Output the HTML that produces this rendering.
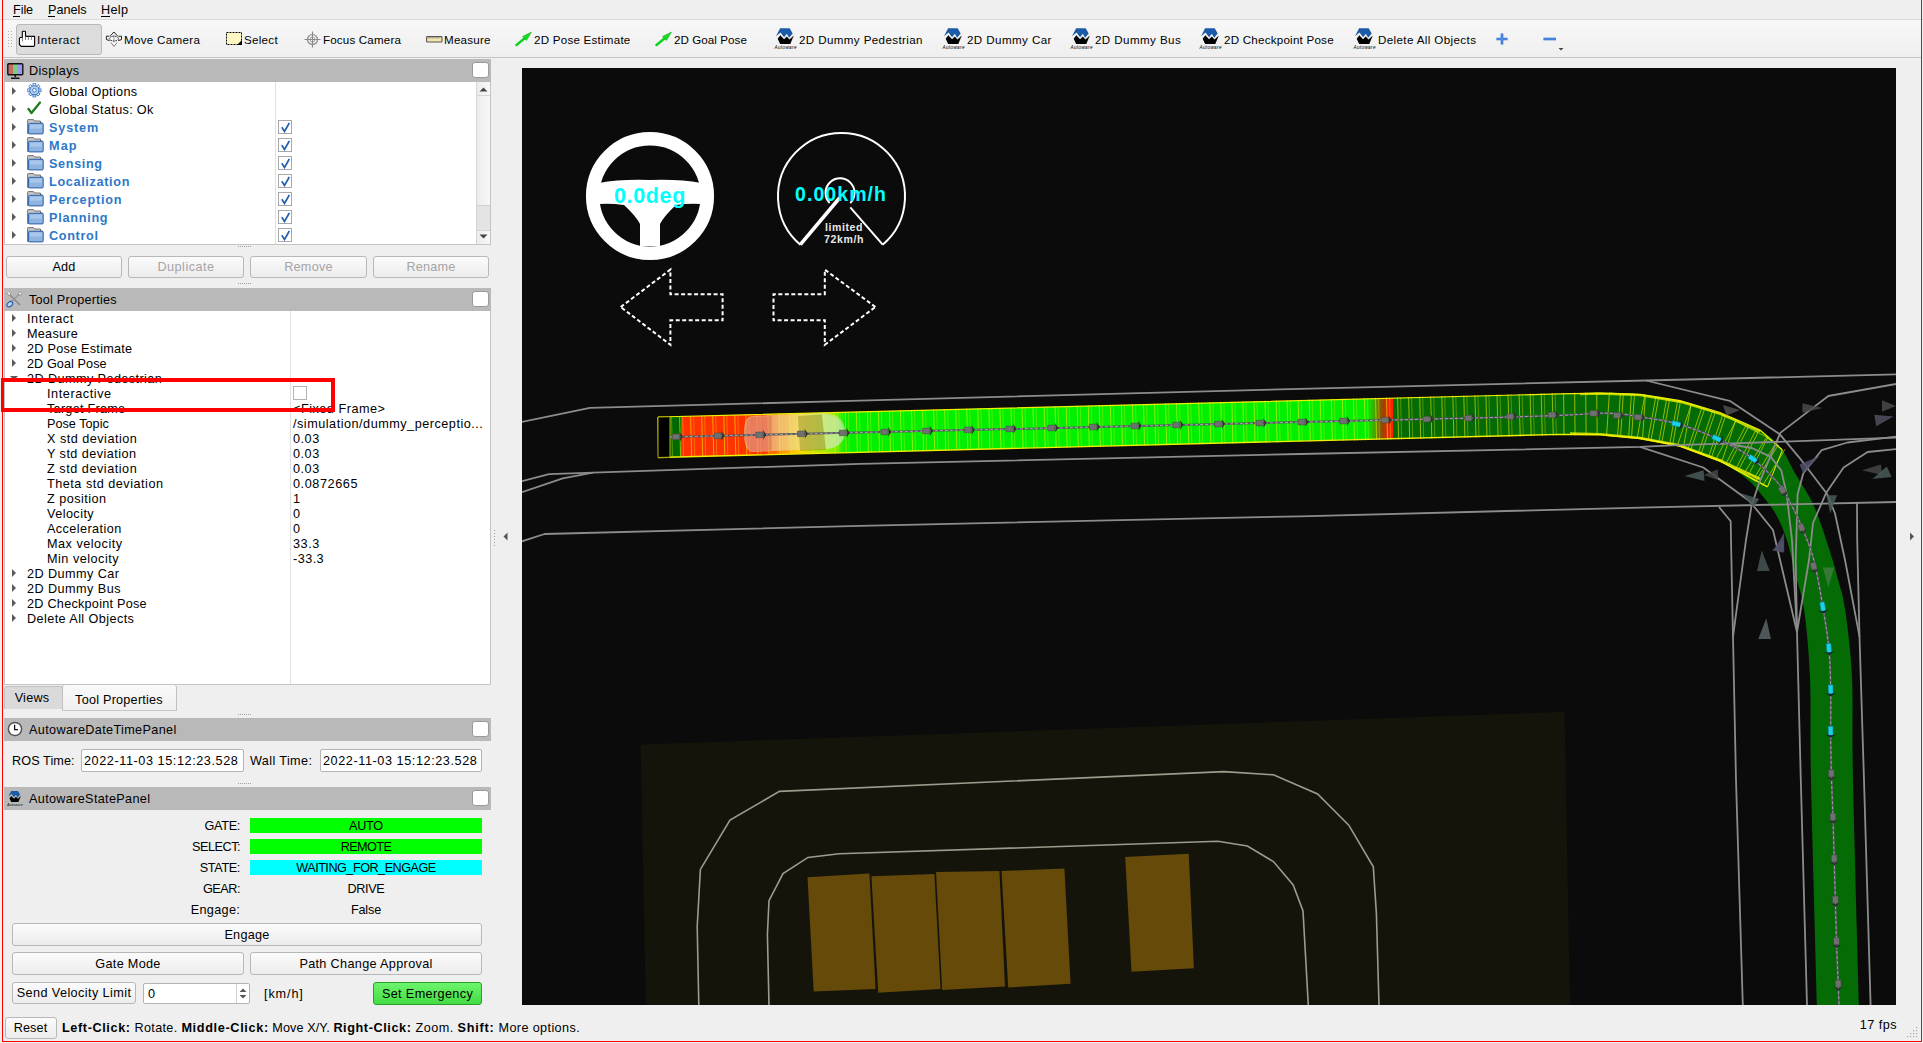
<!DOCTYPE html><html><head><meta charset="utf-8"><style>
*{box-sizing:border-box}
html,body{margin:0;padding:0}
body{width:1923px;height:1043px;overflow:hidden;position:relative;background:#efefef;font-family:"Liberation Sans",sans-serif;color:#000}
.t{position:absolute;white-space:pre;line-height:1;font-family:"Liberation Sans",sans-serif}
.a{position:absolute}
.btn{position:absolute;border:1px solid #b8b8b8;border-radius:3px;background:linear-gradient(#fbfbfb,#ececec)}
.hdr{position:absolute;left:4px;width:487px;height:23px;background:#b9b9b9}
.cls{position:absolute;left:472px;width:17px;height:16px;background:#fff;border:1px solid #9a9a9a;border-radius:3px}
.cb{position:absolute;width:14px;height:14px;border:1px solid #a8a8a8;background:#fff}
.arr{position:absolute;width:0;height:0;border-top:4px solid transparent;border-bottom:4px solid transparent;border-left:4px solid #5a5a5a}
.dots{position:absolute;height:1px;width:13px;background-image:linear-gradient(90deg,#a0a0a0 1px,transparent 1px);background-size:2px 1px}
</style></head><body>
<div class="a" style="left:0;top:19px;width:1923px;height:1px;background:#d9d9d9"></div>
<div class="t" style="left:13.00px;top:4.28px;font-size:12.66px;letter-spacing:-0.078px;">File</div>
<div class="t" style="left:48.00px;top:4.28px;font-size:12.66px;letter-spacing:-0.005px;">Panels</div>
<div class="t" style="left:101.00px;top:4.28px;font-size:12.66px;letter-spacing:0.340px;">Help</div>
<div class="a" style="left:13px;top:16px;width:7px;height:1px;background:#000"></div>
<div class="a" style="left:48px;top:16px;width:7px;height:1px;background:#000"></div>
<div class="a" style="left:101px;top:16px;width:9px;height:1px;background:#000"></div>
<div class="a" style="left:3px;top:20px;width:1918px;height:37px;background:linear-gradient(#f7f7f7,#efefef)"></div>
<div class="a" style="left:3px;top:57px;width:1918px;height:1px;background:#c4c4c4"></div>
<svg class="a" style="left:8px;top:30px" width="6" height="19"><rect x="0" y="1" width="1" height="1" fill="#b0b0b0"/><rect x="0" y="4" width="1" height="1" fill="#b0b0b0"/><rect x="0" y="7" width="1" height="1" fill="#b0b0b0"/><rect x="0" y="10" width="1" height="1" fill="#b0b0b0"/><rect x="0" y="13" width="1" height="1" fill="#b0b0b0"/><rect x="0" y="16" width="1" height="1" fill="#b0b0b0"/><rect x="3" y="1" width="1" height="1" fill="#b0b0b0"/><rect x="3" y="4" width="1" height="1" fill="#b0b0b0"/><rect x="3" y="7" width="1" height="1" fill="#b0b0b0"/><rect x="3" y="10" width="1" height="1" fill="#b0b0b0"/><rect x="3" y="13" width="1" height="1" fill="#b0b0b0"/><rect x="3" y="16" width="1" height="1" fill="#b0b0b0"/></svg>
<div class="a" style="left:16px;top:24px;width:86px;height:31px;background:#dcdcdc;border:1px solid #b9b9b9;border-radius:3px"></div>
<svg class="a" style="left:16px;top:28px" width="22" height="22" viewBox="0 0 22 22"><path d="M6.3 9.5 V3.8 Q6.3 3.2 7 3.2 H8.8 Q9.5 3.2 9.5 3.8 V8.4 H18.6 V17.6 L17.7 18.4 H5.3 L3.4 16.5 V10.4 L4.2 9.5 Z" fill="#fff" stroke="#000" stroke-width="1.1" stroke-linejoin="round"/><path d="M6.5 9.5 V13.5 M9.5 8.4 V12 M12.4 8.4 V12 M15.4 8.4 V12" stroke="#666" stroke-width="0.8"/></svg>
<div class="t" style="left:37.00px;top:34.18px;font-size:11.6px;letter-spacing:0.529px;">Interact</div>
<svg class="a" style="left:102px;top:28px" width="22" height="22" viewBox="102 28 22 22"><rect x="113.2" y="35" width="1.6" height="8.5" fill="#c4c4c4"/><g fill="none" stroke="#222" stroke-width="1" stroke-linejoin="round"><path d="M110.4 35.8 L113.9 32 L117.4 35.8"/><ellipse cx="113.9" cy="38.6" rx="4.6" ry="2.4" stroke-dasharray="1.6 0.9"/><path d="M109.4 36.2 H106.4 V39.6 L109.6 40.6 M118.4 36.2 H121.5 V39.6 L118.2 40.6"/></g><path d="M111 42.6 L113.9 46.4 L117 42.6" fill="#fff" stroke="#777" stroke-width="1"/></svg>
<div class="t" style="left:124.00px;top:34.18px;font-size:11.6px;letter-spacing:0.303px;">Move Camera</div>
<svg class="a" style="left:226px;top:32px" width="17" height="14" viewBox="0 0 17 14"><rect x="0.5" y="0.5" width="15" height="12" fill="#fff7c4" stroke="#000" stroke-width="1" stroke-dasharray="2 1"/><path d="M16 8 V13 H11 Z" fill="#000"/></svg>
<div class="t" style="left:244.00px;top:34.18px;font-size:11.6px;letter-spacing:0.284px;">Select</div>
<svg class="a" style="left:304px;top:31px" width="17" height="17" viewBox="0 0 17 17"><g fill="none" stroke="#8a8a8a" stroke-width="1.2"><circle cx="8.5" cy="8.5" r="5"/><path d="M8.5 0.5 V16.5 M0.5 8.5 H16.5"/><circle cx="8.5" cy="8.5" r="2.5" stroke-width="0.7"/></g></svg>
<div class="t" style="left:323.00px;top:34.18px;font-size:11.6px;letter-spacing:0.169px;">Focus Camera</div>
<svg class="a" style="left:426px;top:36px" width="17" height="7" viewBox="0 0 17 7"><rect x="0.6" y="0.6" width="15.4" height="5.4" rx="0.8" fill="#f2e5ae" stroke="#555" stroke-width="1.1"/><path d="M3 1 v2 M5 1 v1.5 M7 1 v2 M9 1 v1.5 M11 1 v2 M13 1 v1.5" stroke="#777" stroke-width="0.6"/></svg>
<div class="t" style="left:444.00px;top:34.18px;font-size:11.6px;letter-spacing:0.230px;">Measure</div>
<svg class="a" style="left:515px;top:31px" width="18" height="16" viewBox="0 0 18 16"><path d="M1.5 14 L10 7" stroke="#10d020" stroke-width="2.4" stroke-linecap="round"/><path d="M16.5 1 L7.5 5.5 L11.5 9.5 Z" fill="#10e020" stroke="#0a8a10" stroke-width="0.4"/></svg>
<div class="t" style="left:534.00px;top:34.18px;font-size:11.6px;letter-spacing:0.233px;">2D Pose Estimate</div>
<svg class="a" style="left:655px;top:31px" width="18" height="16" viewBox="0 0 18 16"><path d="M1.5 14 L10 7" stroke="#10d020" stroke-width="2.4" stroke-linecap="round"/><path d="M16.5 1 L7.5 5.5 L11.5 9.5 Z" fill="#10e020" stroke="#0a8a10" stroke-width="0.4"/></svg>
<div class="t" style="left:674.00px;top:34.18px;font-size:11.6px;letter-spacing:0.068px;">2D Goal Pose</div>
<svg class="a" style="left:773px;top:27px" width="25.0" height="24.0" viewBox="0 0 25 24"><path d="M3 9.3 L7.1 1.3 H16.7 L19.7 6.4 L16.2 10.8 L13.8 6.8 L11.1 10.2 L7.5 5.5 Z" fill="#1b5aa6"/><path d="M4.7 11.8 L7.3 8.3 L11.1 12.2 L13.8 9.6 L16.5 12.4 L20.8 8.5 L17.3 16.9 H7.1 Z" fill="#000"/><text x="1.5" y="22.3" font-size="4.6" font-style="italic" font-family="Liberation Sans" fill="#000" textLength="22">Autoware</text></svg>
<div class="t" style="left:799.00px;top:34.18px;font-size:11.6px;letter-spacing:0.384px;">2D Dummy Pedestrian</div>
<svg class="a" style="left:941px;top:27px" width="25.0" height="24.0" viewBox="0 0 25 24"><path d="M3 9.3 L7.1 1.3 H16.7 L19.7 6.4 L16.2 10.8 L13.8 6.8 L11.1 10.2 L7.5 5.5 Z" fill="#1b5aa6"/><path d="M4.7 11.8 L7.3 8.3 L11.1 12.2 L13.8 9.6 L16.5 12.4 L20.8 8.5 L17.3 16.9 H7.1 Z" fill="#000"/><text x="1.5" y="22.3" font-size="4.6" font-style="italic" font-family="Liberation Sans" fill="#000" textLength="22">Autoware</text></svg>
<div class="t" style="left:967.00px;top:34.18px;font-size:11.6px;letter-spacing:0.409px;">2D Dummy Car</div>
<svg class="a" style="left:1069px;top:27px" width="25.0" height="24.0" viewBox="0 0 25 24"><path d="M3 9.3 L7.1 1.3 H16.7 L19.7 6.4 L16.2 10.8 L13.8 6.8 L11.1 10.2 L7.5 5.5 Z" fill="#1b5aa6"/><path d="M4.7 11.8 L7.3 8.3 L11.1 12.2 L13.8 9.6 L16.5 12.4 L20.8 8.5 L17.3 16.9 H7.1 Z" fill="#000"/><text x="1.5" y="22.3" font-size="4.6" font-style="italic" font-family="Liberation Sans" fill="#000" textLength="22">Autoware</text></svg>
<div class="t" style="left:1095.00px;top:34.18px;font-size:11.6px;letter-spacing:0.410px;">2D Dummy Bus</div>
<svg class="a" style="left:1198px;top:27px" width="25.0" height="24.0" viewBox="0 0 25 24"><path d="M3 9.3 L7.1 1.3 H16.7 L19.7 6.4 L16.2 10.8 L13.8 6.8 L11.1 10.2 L7.5 5.5 Z" fill="#1b5aa6"/><path d="M4.7 11.8 L7.3 8.3 L11.1 12.2 L13.8 9.6 L16.5 12.4 L20.8 8.5 L17.3 16.9 H7.1 Z" fill="#000"/><text x="1.5" y="22.3" font-size="4.6" font-style="italic" font-family="Liberation Sans" fill="#000" textLength="22">Autoware</text></svg>
<div class="t" style="left:1224.00px;top:34.18px;font-size:11.6px;letter-spacing:0.229px;">2D Checkpoint Pose</div>
<svg class="a" style="left:1352px;top:27px" width="25.0" height="24.0" viewBox="0 0 25 24"><path d="M3 9.3 L7.1 1.3 H16.7 L19.7 6.4 L16.2 10.8 L13.8 6.8 L11.1 10.2 L7.5 5.5 Z" fill="#1b5aa6"/><path d="M4.7 11.8 L7.3 8.3 L11.1 12.2 L13.8 9.6 L16.5 12.4 L20.8 8.5 L17.3 16.9 H7.1 Z" fill="#000"/><text x="1.5" y="22.3" font-size="4.6" font-style="italic" font-family="Liberation Sans" fill="#000" textLength="22">Autoware</text></svg>
<div class="t" style="left:1378.00px;top:34.18px;font-size:11.6px;letter-spacing:0.379px;">Delete All Objects</div>
<svg class="a" style="left:1495px;top:32px" width="14" height="14" viewBox="0 0 14 14"><path d="M7 1.5 V12.5 M1.5 7 H12.5" stroke="#2e6fd0" stroke-width="2.6"/><path d="M7 1.5 V12.5 M1.5 7 H12.5" stroke="#6aa0ee" stroke-width="0.8"/></svg>
<svg class="a" style="left:1543px;top:36px" width="22" height="16" viewBox="0 0 22 16"><path d="M0.5 3 H13" stroke="#2e6fd0" stroke-width="2.6"/><path d="M0.5 3 H13" stroke="#6aa0ee" stroke-width="0.8"/><path d="M15.5 12 H20.5 L18 14.5 Z" fill="#444"/></svg>
<div class="hdr" style="top:59px"></div>
<div class="cls" style="top:62px"></div>
<svg class="a" style="left:7px;top:63px" width="17" height="17" viewBox="0 0 17 17"><defs><linearGradient id="mg" x1="0" x2="1"><stop offset="0" stop-color="#c86a6a"/><stop offset="0.33" stop-color="#c86a6a"/><stop offset="0.34" stop-color="#7ad07a"/><stop offset="0.66" stop-color="#7ad07a"/><stop offset="0.67" stop-color="#9a9af0"/><stop offset="1" stop-color="#9a9af0"/></linearGradient></defs><rect x="0.8" y="0.8" width="15" height="11" rx="1" fill="url(#mg)" stroke="#111" stroke-width="1.4"/><path d="M8.3 12 V14 M4 15.3 H12.5" stroke="#111" stroke-width="1.6"/></svg>
<div class="t" style="left:29.00px;top:65.28px;font-size:12.66px;letter-spacing:0.334px;">Displays</div>
<div class="a" style="left:4px;top:82px;width:487px;height:163px;background:#fff;border:1px solid #c4c4c4;border-top:none"></div>
<div class="a" style="left:275px;top:82px;width:1px;height:162px;background:#e0e0e0"></div>
<div class="a" style="left:476px;top:82px;width:14px;height:162px;background:linear-gradient(90deg,#ececec,#f8f8f8);border-left:1px solid #d6d6d6"></div>
<div class="a" style="left:476px;top:95px;width:14px;height:1px;background:#d6d6d6"></div>
<div class="a" style="left:476px;top:230px;width:14px;height:1px;background:#d6d6d6"></div>
<div class="a" style="left:477px;top:205px;width:13px;height:25px;background:#e4e4e4;border-top:1px solid #cfcfcf"></div>
<svg class="a" style="left:477px;top:84px" width="13" height="160"><path d="M2.5 7.5 L6.5 3.5 L10.5 7.5 Z" fill="#444"/><path d="M2.5 150.5 L6.5 154.5 L10.5 150.5 Z" fill="#444"/></svg>
<div class="arr" style="left:12px;top:87px"></div>
<svg class="a" style="left:27px;top:83px" width="15" height="15" viewBox="0 0 15 15"><g transform="translate(7.4,7.3)"><rect x="-1.4" y="-6.6" width="2.8" height="3" fill="#fff" stroke="#3a78c8" stroke-width="0.9" transform="rotate(0)"/><rect x="-1.4" y="-6.6" width="2.8" height="3" fill="#fff" stroke="#3a78c8" stroke-width="0.9" transform="rotate(45)"/><rect x="-1.4" y="-6.6" width="2.8" height="3" fill="#fff" stroke="#3a78c8" stroke-width="0.9" transform="rotate(90)"/><rect x="-1.4" y="-6.6" width="2.8" height="3" fill="#fff" stroke="#3a78c8" stroke-width="0.9" transform="rotate(135)"/><rect x="-1.4" y="-6.6" width="2.8" height="3" fill="#fff" stroke="#3a78c8" stroke-width="0.9" transform="rotate(180)"/><rect x="-1.4" y="-6.6" width="2.8" height="3" fill="#fff" stroke="#3a78c8" stroke-width="0.9" transform="rotate(225)"/><rect x="-1.4" y="-6.6" width="2.8" height="3" fill="#fff" stroke="#3a78c8" stroke-width="0.9" transform="rotate(270)"/><rect x="-1.4" y="-6.6" width="2.8" height="3" fill="#fff" stroke="#3a78c8" stroke-width="0.9" transform="rotate(315)"/><circle r="4.6" fill="#b8d0f0" stroke="#3a78c8" stroke-width="1.1"/><circle r="1.8" fill="#fff" stroke="#3a78c8" stroke-width="1"/></g></svg>
<div class="t" style="left:49.00px;top:86.28px;font-size:12.66px;letter-spacing:0.338px;">Global Options</div>
<div class="arr" style="left:12px;top:105px"></div>
<svg class="a" style="left:27px;top:101px" width="15" height="14" viewBox="0 0 15 14"><path d="M1.5 8 L4.5 12 L13 1.5" fill="none" stroke="#1b7a1b" stroke-width="2.2" stroke-linejoin="round" stroke-linecap="round"/></svg>
<div class="t" style="left:49.00px;top:104.28px;font-size:12.66px;letter-spacing:0.322px;">Global Status: Ok</div>
<div class="arr" style="left:12px;top:123px"></div>
<svg class="a" style="left:27px;top:119px" width="17" height="16" viewBox="0 0 17 16"><path d="M0.6 14.5 V1.2 Q0.6 0.6 1.2 0.6 H6.5 L7.5 2 H13.5 V4 H15.5 V14.5 Z" fill="#c8c8c8" stroke="#666" stroke-width="0.9"/><rect x="1.6" y="4.3" width="14.6" height="10.6" rx="1" fill="#8fb4e0" stroke="#2c5ea8" stroke-width="1"/><rect x="3" y="5.6" width="11.8" height="4" fill="#a9c7ea"/></svg>
<div class="t" style="left:49.00px;top:122.28px;font-size:12.66px;letter-spacing:0.831px;font-weight:bold;color:#2d78c8;">System</div>
<div class="cb" style="left:278px;top:120px"></div>
<svg class="a" style="left:280px;top:122px" width="11" height="11" viewBox="0 0 11 11"><path d="M1.8 5.2 L4.5 9.5 L9.3 1" fill="none" stroke="#2461b0" stroke-width="1.7"/></svg>
<div class="arr" style="left:12px;top:141px"></div>
<svg class="a" style="left:27px;top:137px" width="17" height="16" viewBox="0 0 17 16"><path d="M0.6 14.5 V1.2 Q0.6 0.6 1.2 0.6 H6.5 L7.5 2 H13.5 V4 H15.5 V14.5 Z" fill="#c8c8c8" stroke="#666" stroke-width="0.9"/><rect x="1.6" y="4.3" width="14.6" height="10.6" rx="1" fill="#8fb4e0" stroke="#2c5ea8" stroke-width="1"/><rect x="3" y="5.6" width="11.8" height="4" fill="#a9c7ea"/></svg>
<div class="t" style="left:49.00px;top:140.28px;font-size:12.66px;letter-spacing:1.104px;font-weight:bold;color:#2d78c8;">Map</div>
<div class="cb" style="left:278px;top:138px"></div>
<svg class="a" style="left:280px;top:140px" width="11" height="11" viewBox="0 0 11 11"><path d="M1.8 5.2 L4.5 9.5 L9.3 1" fill="none" stroke="#2461b0" stroke-width="1.7"/></svg>
<div class="arr" style="left:12px;top:159px"></div>
<svg class="a" style="left:27px;top:155px" width="17" height="16" viewBox="0 0 17 16"><path d="M0.6 14.5 V1.2 Q0.6 0.6 1.2 0.6 H6.5 L7.5 2 H13.5 V4 H15.5 V14.5 Z" fill="#c8c8c8" stroke="#666" stroke-width="0.9"/><rect x="1.6" y="4.3" width="14.6" height="10.6" rx="1" fill="#8fb4e0" stroke="#2c5ea8" stroke-width="1"/><rect x="3" y="5.6" width="11.8" height="4" fill="#a9c7ea"/></svg>
<div class="t" style="left:49.00px;top:158.28px;font-size:12.66px;letter-spacing:0.643px;font-weight:bold;color:#2d78c8;">Sensing</div>
<div class="cb" style="left:278px;top:156px"></div>
<svg class="a" style="left:280px;top:158px" width="11" height="11" viewBox="0 0 11 11"><path d="M1.8 5.2 L4.5 9.5 L9.3 1" fill="none" stroke="#2461b0" stroke-width="1.7"/></svg>
<div class="arr" style="left:12px;top:177px"></div>
<svg class="a" style="left:27px;top:173px" width="17" height="16" viewBox="0 0 17 16"><path d="M0.6 14.5 V1.2 Q0.6 0.6 1.2 0.6 H6.5 L7.5 2 H13.5 V4 H15.5 V14.5 Z" fill="#c8c8c8" stroke="#666" stroke-width="0.9"/><rect x="1.6" y="4.3" width="14.6" height="10.6" rx="1" fill="#8fb4e0" stroke="#2c5ea8" stroke-width="1"/><rect x="3" y="5.6" width="11.8" height="4" fill="#a9c7ea"/></svg>
<div class="t" style="left:49.00px;top:176.28px;font-size:12.66px;letter-spacing:0.659px;font-weight:bold;color:#2d78c8;">Localization</div>
<div class="cb" style="left:278px;top:174px"></div>
<svg class="a" style="left:280px;top:176px" width="11" height="11" viewBox="0 0 11 11"><path d="M1.8 5.2 L4.5 9.5 L9.3 1" fill="none" stroke="#2461b0" stroke-width="1.7"/></svg>
<div class="arr" style="left:12px;top:195px"></div>
<svg class="a" style="left:27px;top:191px" width="17" height="16" viewBox="0 0 17 16"><path d="M0.6 14.5 V1.2 Q0.6 0.6 1.2 0.6 H6.5 L7.5 2 H13.5 V4 H15.5 V14.5 Z" fill="#c8c8c8" stroke="#666" stroke-width="0.9"/><rect x="1.6" y="4.3" width="14.6" height="10.6" rx="1" fill="#8fb4e0" stroke="#2c5ea8" stroke-width="1"/><rect x="3" y="5.6" width="11.8" height="4" fill="#a9c7ea"/></svg>
<div class="t" style="left:49.00px;top:194.28px;font-size:12.66px;letter-spacing:0.795px;font-weight:bold;color:#2d78c8;">Perception</div>
<div class="cb" style="left:278px;top:192px"></div>
<svg class="a" style="left:280px;top:194px" width="11" height="11" viewBox="0 0 11 11"><path d="M1.8 5.2 L4.5 9.5 L9.3 1" fill="none" stroke="#2461b0" stroke-width="1.7"/></svg>
<div class="arr" style="left:12px;top:213px"></div>
<svg class="a" style="left:27px;top:209px" width="17" height="16" viewBox="0 0 17 16"><path d="M0.6 14.5 V1.2 Q0.6 0.6 1.2 0.6 H6.5 L7.5 2 H13.5 V4 H15.5 V14.5 Z" fill="#c8c8c8" stroke="#666" stroke-width="0.9"/><rect x="1.6" y="4.3" width="14.6" height="10.6" rx="1" fill="#8fb4e0" stroke="#2c5ea8" stroke-width="1"/><rect x="3" y="5.6" width="11.8" height="4" fill="#a9c7ea"/></svg>
<div class="t" style="left:49.00px;top:212.28px;font-size:12.66px;letter-spacing:0.738px;font-weight:bold;color:#2d78c8;">Planning</div>
<div class="cb" style="left:278px;top:210px"></div>
<svg class="a" style="left:280px;top:212px" width="11" height="11" viewBox="0 0 11 11"><path d="M1.8 5.2 L4.5 9.5 L9.3 1" fill="none" stroke="#2461b0" stroke-width="1.7"/></svg>
<div class="arr" style="left:12px;top:231px"></div>
<svg class="a" style="left:27px;top:227px" width="17" height="16" viewBox="0 0 17 16"><path d="M0.6 14.5 V1.2 Q0.6 0.6 1.2 0.6 H6.5 L7.5 2 H13.5 V4 H15.5 V14.5 Z" fill="#c8c8c8" stroke="#666" stroke-width="0.9"/><rect x="1.6" y="4.3" width="14.6" height="10.6" rx="1" fill="#8fb4e0" stroke="#2c5ea8" stroke-width="1"/><rect x="3" y="5.6" width="11.8" height="4" fill="#a9c7ea"/></svg>
<div class="t" style="left:49.00px;top:230.28px;font-size:12.66px;letter-spacing:0.661px;font-weight:bold;color:#2d78c8;">Control</div>
<div class="cb" style="left:278px;top:228px"></div>
<svg class="a" style="left:280px;top:230px" width="11" height="11" viewBox="0 0 11 11"><path d="M1.8 5.2 L4.5 9.5 L9.3 1" fill="none" stroke="#2461b0" stroke-width="1.7"/></svg>
<div class="dots" style="left:238px;top:246px"></div>
<div class="btn" style="left:6px;top:256px;width:116px;height:22px"></div>
<div class="t" style="left:52.38px;top:261.28px;font-size:12.66px;letter-spacing:0.250px;">Add</div>
<div class="btn" style="left:128px;top:256px;width:116px;height:22px"></div>
<div class="t" style="left:157.41px;top:261.28px;font-size:12.66px;letter-spacing:0.493px;color:#a4a4a4;">Duplicate</div>
<div class="btn" style="left:250px;top:256px;width:117px;height:22px"></div>
<div class="t" style="left:284.13px;top:261.28px;font-size:12.66px;letter-spacing:0.271px;color:#a4a4a4;">Remove</div>
<div class="btn" style="left:373px;top:256px;width:116px;height:22px"></div>
<div class="t" style="left:406.38px;top:261.28px;font-size:12.66px;letter-spacing:0.240px;color:#a4a4a4;">Rename</div>
<div class="dots" style="left:238px;top:283px"></div>
<div class="hdr" style="top:288px"></div>
<div class="cls" style="top:291px"></div>
<svg class="a" style="left:6px;top:291px" width="17" height="17" viewBox="0 0 17 17"><path d="M3 3 L14 14" stroke="#888" stroke-width="1.6"/><path d="M14 2.5 L4 12" stroke="#9a9a9a" stroke-width="1.6"/><circle cx="14.3" cy="2.6" r="1.5" fill="#fff" stroke="#888" stroke-width="0.9"/><path d="M1.5 2 Q2 5 4.5 4.5 Q5.5 2 3 1" fill="#fff" stroke="#888" stroke-width="0.9"/><ellipse cx="3.8" cy="13.3" rx="3.2" ry="2.2" transform="rotate(-40 3.8 13.3)" fill="#bcd4f0" stroke="#2b5fb0" stroke-width="1.2"/></svg>
<div class="t" style="left:29.00px;top:294.28px;font-size:12.66px;letter-spacing:0.228px;">Tool Properties</div>
<div class="a" style="left:4px;top:311px;width:487px;height:374px;background:#fff;border:1px solid #c4c4c4;border-top:none"></div>
<div class="a" style="left:290px;top:311px;width:1px;height:373px;background:#e0e0e0"></div>
<div class="arr" style="left:12px;top:314px"></div>
<div class="t" style="left:27.00px;top:313.28px;font-size:12.66px;letter-spacing:0.582px;">Interact</div>
<div class="arr" style="left:12px;top:329px"></div>
<div class="t" style="left:27.00px;top:328.28px;font-size:12.66px;letter-spacing:0.259px;">Measure</div>
<div class="arr" style="left:12px;top:344px"></div>
<div class="t" style="left:27.00px;top:343.28px;font-size:12.66px;letter-spacing:0.253px;">2D Pose Estimate</div>
<div class="arr" style="left:12px;top:359px"></div>
<div class="t" style="left:27.00px;top:358.28px;font-size:12.66px;letter-spacing:0.073px;">2D Goal Pose</div>
<div class="a" style="left:10px;top:376px;width:0;height:0;border-left:4px solid transparent;border-right:4px solid transparent;border-top:4px solid #5a5a5a"></div>
<div class="t" style="left:27.00px;top:373.28px;font-size:12.66px;letter-spacing:0.419px;">2D Dummy Pedestrian</div>
<div class="t" style="left:47.00px;top:388.28px;font-size:12.66px;letter-spacing:0.574px;">Interactive</div>
<div class="cb" style="left:293px;top:386px;border-color:#b4b4b4"></div>
<div class="t" style="left:47.00px;top:403.28px;font-size:12.66px;letter-spacing:0.262px;">Target Frame</div>
<div class="t" style="left:293.00px;top:403.28px;font-size:12.66px;letter-spacing:0.512px;">&lt;Fixed Frame&gt;</div>
<div class="t" style="left:47.00px;top:418.28px;font-size:12.66px;letter-spacing:0.016px;">Pose Topic</div>
<div class="t" style="left:293.00px;top:418.28px;font-size:12.66px;letter-spacing:0.506px;">/simulation/dummy_perceptio...</div>
<div class="t" style="left:47.00px;top:433.28px;font-size:12.66px;letter-spacing:0.483px;">X std deviation</div>
<div class="t" style="left:293.00px;top:433.28px;font-size:12.66px;letter-spacing:0.531px;">0.03</div>
<div class="t" style="left:47.00px;top:448.28px;font-size:12.66px;letter-spacing:0.440px;">Y std deviation</div>
<div class="t" style="left:293.00px;top:448.28px;font-size:12.66px;letter-spacing:0.531px;">0.03</div>
<div class="t" style="left:47.00px;top:463.28px;font-size:12.66px;letter-spacing:0.530px;">Z std deviation</div>
<div class="t" style="left:293.00px;top:463.28px;font-size:12.66px;letter-spacing:0.531px;">0.03</div>
<div class="t" style="left:47.00px;top:478.28px;font-size:12.66px;letter-spacing:0.501px;">Theta std deviation</div>
<div class="t" style="left:293.00px;top:478.28px;font-size:12.66px;letter-spacing:0.575px;">0.0872665</div>
<div class="t" style="left:47.00px;top:493.28px;font-size:12.66px;letter-spacing:0.472px;">Z position</div>
<div class="t" style="left:293.00px;top:493.28px;font-size:12.66px;letter-spacing:0.609px;">1</div>
<div class="t" style="left:47.00px;top:508.28px;font-size:12.66px;letter-spacing:0.434px;">Velocity</div>
<div class="t" style="left:293.00px;top:508.28px;font-size:12.66px;letter-spacing:0.609px;">0</div>
<div class="t" style="left:47.00px;top:523.28px;font-size:12.66px;letter-spacing:0.414px;">Acceleration</div>
<div class="t" style="left:293.00px;top:523.28px;font-size:12.66px;letter-spacing:0.609px;">0</div>
<div class="t" style="left:47.00px;top:538.28px;font-size:12.66px;letter-spacing:0.495px;">Max velocity</div>
<div class="t" style="left:293.00px;top:538.28px;font-size:12.66px;letter-spacing:0.531px;">33.3</div>
<div class="t" style="left:47.00px;top:553.28px;font-size:12.66px;letter-spacing:0.493px;">Min velocity</div>
<div class="t" style="left:293.00px;top:553.28px;font-size:12.66px;letter-spacing:0.447px;">-33.3</div>
<div class="arr" style="left:12px;top:569px"></div>
<div class="t" style="left:27.00px;top:568.28px;font-size:12.66px;letter-spacing:0.443px;">2D Dummy Car</div>
<div class="arr" style="left:12px;top:584px"></div>
<div class="t" style="left:27.00px;top:583.28px;font-size:12.66px;letter-spacing:0.444px;">2D Dummy Bus</div>
<div class="arr" style="left:12px;top:599px"></div>
<div class="t" style="left:27.00px;top:598.28px;font-size:12.66px;letter-spacing:0.251px;">2D Checkpoint Pose</div>
<div class="arr" style="left:12px;top:614px"></div>
<div class="t" style="left:27.00px;top:613.28px;font-size:12.66px;letter-spacing:0.412px;">Delete All Objects</div>
<div class="a" style="left:1px;top:378px;width:334px;height:34px;border:4px solid #ff0000;border-left-width:3px"></div>
<div class="a" style="left:4px;top:686px;width:59px;height:23px;background:#dadada;border:1px solid #c0c0c0;border-radius:3px 3px 0 0;border-bottom:none"></div>
<div class="a" style="left:62px;top:685px;width:115px;height:26px;background:linear-gradient(#f9f9f9,#efefef);border:1px solid #c0c0c0;border-radius:3px 3px 0 0;border-bottom:none;border-top:none"></div>
<div class="a" style="left:62px;top:709px;width:115px;height:2px;border-bottom:1px solid #c6c6c6;border-radius:0 0 3px 3px"></div>
<div class="t" style="left:14.64px;top:692.28px;font-size:12.66px;letter-spacing:0.241px;">Views</div>
<div class="t" style="left:75.10px;top:694.28px;font-size:12.66px;letter-spacing:0.228px;">Tool Properties</div>
<div class="dots" style="left:238px;top:714px"></div>
<div class="hdr" style="top:718px"></div>
<div class="cls" style="top:721px"></div>
<svg class="a" style="left:7px;top:721px" width="16" height="16" viewBox="0 0 16 16"><circle cx="8" cy="8" r="6.6" fill="#fff" stroke="#555" stroke-width="1.5"/><path d="M7.6 3.8 V8.6 H11" fill="none" stroke="#111" stroke-width="1.3"/></svg>
<div class="t" style="left:29.00px;top:724.28px;font-size:12.66px;letter-spacing:0.351px;">AutowareDateTimePanel</div>
<div class="t" style="left:12.00px;top:755.28px;font-size:12.66px;letter-spacing:0.085px;">ROS Time:</div>
<div class="a" style="left:81px;top:749px;width:163px;height:23px;background:#fff;border:1px solid #b4b4b4;border-radius:2px"></div>
<div class="t" style="left:84.00px;top:755.28px;font-size:12.66px;letter-spacing:0.573px;">2022-11-03 15:12:23.528</div>
<div class="t" style="left:250.00px;top:755.28px;font-size:12.66px;letter-spacing:0.373px;">Wall Time:</div>
<div class="a" style="left:320px;top:749px;width:162px;height:23px;background:#fff;border:1px solid #b4b4b4;border-radius:2px"></div>
<div class="t" style="left:323.00px;top:755.28px;font-size:12.66px;letter-spacing:0.573px;">2022-11-03 15:12:23.528</div>
<div class="dots" style="left:238px;top:783px"></div>
<div class="hdr" style="top:787px"></div>
<div class="cls" style="top:790px"></div>
<svg class="a" style="left:6px;top:790px" width="18" height="17" viewBox="0 0 25 24"><path d="M3 9.3 L7.1 1.3 H16.7 L19.7 6.4 L16.2 10.8 L13.8 6.8 L11.1 10.2 L7.5 5.5 Z" fill="#1b5aa6"/><path d="M4.7 11.8 L7.3 8.3 L11.1 12.2 L13.8 9.6 L16.5 12.4 L20.8 8.5 L17.3 16.9 H7.1 Z" fill="#000"/><text x="1.5" y="22.3" font-size="4.6" font-style="italic" font-family="Liberation Sans" fill="#000" textLength="22">Autoware</text></svg>
<div class="t" style="left:29.00px;top:793.28px;font-size:12.66px;letter-spacing:0.331px;">AutowareStatePanel</div>
<div class="t" style="left:204.48px;top:820.28px;font-size:12.66px;letter-spacing:-0.303px;">GATE:</div>
<div class="a" style="left:250px;top:818.0px;width:232px;height:15px;background:#00ff00"></div>
<div class="t" style="left:349.12px;top:820.28px;font-size:12.66px;letter-spacing:-0.289px;">AUTO</div>
<div class="t" style="left:192.09px;top:841.28px;font-size:12.66px;letter-spacing:-0.489px;">SELECT:</div>
<div class="a" style="left:250px;top:839.0px;width:232px;height:15px;background:#00ff00"></div>
<div class="t" style="left:340.68px;top:841.28px;font-size:12.66px;letter-spacing:-0.583px;">REMOTE</div>
<div class="t" style="left:199.77px;top:862.28px;font-size:12.66px;letter-spacing:-0.365px;">STATE:</div>
<div class="a" style="left:250px;top:860.0px;width:232px;height:15px;background:#00ffff"></div>
<div class="t" style="left:296.23px;top:862.28px;font-size:12.66px;letter-spacing:-0.503px;">WAITING_FOR_ENGAGE</div>
<div class="t" style="left:202.91px;top:883.28px;font-size:12.66px;letter-spacing:-0.456px;">GEAR:</div>
<div class="t" style="left:347.55px;top:883.28px;font-size:12.66px;letter-spacing:-0.353px;">DRIVE</div>
<div class="t" style="left:190.77px;top:904.28px;font-size:12.66px;letter-spacing:0.304px;">Engage:</div>
<div class="t" style="left:350.93px;top:904.28px;font-size:12.66px;letter-spacing:-0.159px;">False</div>
<div class="btn" style="left:12px;top:923px;width:470px;height:23px"></div>
<div class="t" style="left:224.41px;top:929.28px;font-size:12.66px;letter-spacing:0.266px;">Engage</div>
<div class="btn" style="left:12px;top:952px;width:232px;height:23px"></div>
<div class="t" style="left:95.36px;top:958.28px;font-size:12.66px;letter-spacing:0.300px;">Gate Mode</div>
<div class="btn" style="left:250px;top:952px;width:232px;height:23px"></div>
<div class="t" style="left:299.38px;top:958.28px;font-size:12.66px;letter-spacing:0.334px;">Path Change Approval</div>
<div class="btn" style="left:12px;top:982px;width:124px;height:22px"></div>
<div class="t" style="left:16.66px;top:987.28px;font-size:12.66px;letter-spacing:0.410px;">Send Velocity Limit</div>
<div class="a" style="left:143px;top:983px;width:107px;height:21px;background:#fff;border:1px solid #b4b4b4;border-radius:2px"></div>
<div class="a" style="left:236px;top:984px;width:1px;height:19px;background:#d0d0d0"></div>
<svg class="a" style="left:237px;top:984px" width="12" height="19"><path d="M2.5 8 L6 4.5 L9.5 8 Z M2.5 11 L6 14.5 L9.5 11 Z" fill="#555"/></svg>
<div class="t" style="left:148.00px;top:988.28px;font-size:12.66px;letter-spacing:0.609px;">0</div>
<div class="t" style="left:264.00px;top:988.28px;font-size:12.66px;letter-spacing:0.870px;">[km/h]</div>
<div class="a" style="left:373px;top:982px;width:109px;height:23px;background:linear-gradient(#6cf46c,#44dc44);border:1px solid #2aa02a;border-radius:3px"></div>
<div class="t" style="left:381.88px;top:988.28px;font-size:12.66px;letter-spacing:0.367px;">Set Emergency</div>
<svg class="a" style="left:493px;top:529px" width="3" height="19"><rect x="1" y="1" width="1" height="1" fill="#999"/><rect x="1" y="4" width="1" height="1" fill="#999"/><rect x="1" y="7" width="1" height="1" fill="#999"/><rect x="1" y="10" width="1" height="1" fill="#999"/><rect x="1" y="13" width="1" height="1" fill="#999"/><rect x="1" y="16" width="1" height="1" fill="#999"/></svg>
<svg class="a" style="left:501px;top:531px" width="8" height="11"><path d="M6.5 1.5 L2.5 5.5 L6.5 9.5 Z" fill="#555"/></svg>
<svg class="a" style="left:1908px;top:531px" width="8" height="11"><path d="M2 1.5 L6 5.5 L2 9.5 Z" fill="#555"/></svg>
<div class="btn" style="left:5px;top:1017px;width:52px;height:22px"></div>
<div class="t" style="left:13.73px;top:1022.28px;font-size:12.66px;letter-spacing:0.100px;">Reset</div>
<div class="t" style="left:62.00px;top:1022.28px;font-size:12.66px;letter-spacing:0.615px;font-weight:bold;">Left-Click:</div>
<div class="t" style="left:130.64px;top:1022.28px;font-size:12.66px;letter-spacing:0.326px;"> Rotate. </div>
<div class="t" style="left:181.39px;top:1022.28px;font-size:12.66px;letter-spacing:0.665px;font-weight:bold;">Middle-Click:</div>
<div class="t" style="left:268.78px;top:1022.28px;font-size:12.66px;letter-spacing:0.077px;"> Move X/Y. </div>
<div class="t" style="left:333.39px;top:1022.28px;font-size:12.66px;letter-spacing:0.592px;font-weight:bold;">Right-Click:</div>
<div class="t" style="left:411.52px;top:1022.28px;font-size:12.66px;letter-spacing:0.449px;"> Zoom. </div>
<div class="t" style="left:457.55px;top:1022.28px;font-size:12.66px;letter-spacing:0.784px;font-weight:bold;">Shift:</div>
<div class="t" style="left:494.59px;top:1022.28px;font-size:12.66px;letter-spacing:0.375px;"> More options.</div>
<div class="t" style="left:1859.81px;top:1019.28px;font-size:12.66px;letter-spacing:0.456px;">17 fps</div>
<svg class="a" style="left:1906px;top:1026px" width="12" height="12"><rect x="10" y="1" width="1.2" height="1.2" fill="#aaa"/><rect x="7" y="4" width="1.2" height="1.2" fill="#aaa"/><rect x="10" y="4" width="1.2" height="1.2" fill="#aaa"/><rect x="4" y="7" width="1.2" height="1.2" fill="#aaa"/><rect x="7" y="7" width="1.2" height="1.2" fill="#aaa"/><rect x="10" y="7" width="1.2" height="1.2" fill="#aaa"/><rect x="1" y="10" width="1.2" height="1.2" fill="#aaa"/><rect x="4" y="10" width="1.2" height="1.2" fill="#aaa"/><rect x="7" y="10" width="1.2" height="1.2" fill="#aaa"/><rect x="10" y="10" width="1.2" height="1.2" fill="#aaa"/></svg>
<div class="a" style="left:2px;top:-5px;width:1920px;height:1047px;border:1px solid #ff0000;border-top:none"></div>
<svg class="a" style="left:522px;top:68px" width="1374" height="937" viewBox="522 68 1374 937"><defs><linearGradient id="band" gradientUnits="userSpaceOnUse" x1="658" y1="0" x2="1600" y2="0"><stop offset="0.0127" stop-color="#006a00"/><stop offset="0.0244" stop-color="#006a00"/><stop offset="0.0249" stop-color="#ff3300"/><stop offset="0.1104" stop-color="#ff3300"/><stop offset="0.1507" stop-color="#ffd800"/><stop offset="0.1879" stop-color="#80f000"/><stop offset="0.1996" stop-color="#00f000"/><stop offset="0.7537" stop-color="#00f000"/><stop offset="0.7696" stop-color="#a04000"/><stop offset="0.7771" stop-color="#ff2000"/><stop offset="0.7803" stop-color="#ff2000"/><stop offset="0.7808" stop-color="#056c05"/><stop offset="1.0000" stop-color="#056c05"/></linearGradient></defs><rect x="522" y="68" width="1374" height="937" fill="#0b0b0b"/><polygon points="640.6,744.6 1564.6,711.8 1570,1005 645.8,1005" fill="#14140b"/><polyline points="698.8,1005 697.2,926.6 700.4,869.4 730,820 779.4,791.4 1224,771.6 1273.4,774.8 1317.6,794 1348.8,825.2 1373.3,866.8 1376.4,913.6 1379,1005" fill="none" stroke="#9c9c8c" stroke-width="1.6"/><polyline points="769,1005 767.4,934.4 769,900.6 783,873.6 808,857.4 839.2,853.8 1217.8,841.3 1247.4,846 1273.4,861.6 1293.2,885 1303,911 1308.3,1005" fill="none" stroke="#9c9c8c" stroke-width="1.6"/><polygon points="807.5,877.2 869.4,873.6 875.6,989.0 813.7,991.6" fill="#654a0a"/><polygon points="871.4,876.2 934.4,874.0 940.6,989.0 878.2,992.7" fill="#654a0a"/><polygon points="936.0,872.0 999.4,871.0 1005.0,986.4 942.2,990.0" fill="#654a0a"/><polygon points="1001.5,871.0 1064.4,868.4 1070.6,983.8 1008.2,987.5" fill="#654a0a"/><polygon points="1125.2,857.0 1188.7,853.8 1193.9,968.2 1131.5,971.8" fill="#654a0a"/><polygon points="670.0,416.7 1560.0,393.9 1560.0,434.4 670.0,457.2" fill="url(#band)"/><path d="M1560.0 393.9 C1566.7 393.7 1586.7 392.8 1600.0 392.8 C1613.3 392.8 1626.7 392.7 1640.0 394.0 C1653.3 395.3 1666.7 397.5 1680.0 400.6 C1693.3 403.7 1706.7 407.6 1720.0 412.5 C1733.3 417.4 1749.7 423.9 1760.0 430.0 C1770.3 436.1 1775.8 442.1 1781.7 449.4 C1787.6 456.7 1790.3 465.1 1795.2 473.6 C1800.1 482.1 1806.8 491.5 1811.3 500.4 C1815.8 509.3 1818.4 517.1 1822.0 527.2 C1825.6 537.3 1830.1 552.0 1832.8 560.8 C1835.5 569.6 1836.1 572.0 1838.1 580.0 C1840.1 588.0 1842.7 592.7 1845.0 609.0 C1847.3 625.3 1850.7 649.5 1852.0 678.0 C1853.3 706.5 1851.8 725.5 1853.0 780.0 C1854.2 834.5 1858.0 967.5 1859.0 1005.0 L1817.0 1005.0 C1816.0 967.5 1812.2 834.5 1811.0 780.0 C1809.8 725.5 1811.2 706.5 1810.0 678.0 C1808.8 649.5 1806.5 626.3 1804.0 609.0 C1801.5 591.7 1798.0 585.6 1795.2 574.2 C1792.4 562.8 1790.2 550.5 1787.1 540.7 C1784.0 530.9 1780.4 522.6 1776.4 515.2 C1772.4 507.8 1767.9 502.4 1763.0 496.4 C1758.1 490.3 1754.0 484.6 1746.8 478.9 C1739.6 473.2 1731.1 467.3 1720.0 462.0 C1708.9 456.7 1693.3 450.8 1680.0 447.0 C1666.7 443.2 1653.3 441.0 1640.0 439.0 C1626.7 437.0 1613.3 435.6 1600.0 434.8 C1586.7 434.0 1566.7 434.5 1560.0 434.4 Z" fill="#056c05"/><path d="M657.5 417.0 L658.5 457.5 M668.5 416.7 L669.6 457.2 M679.6 416.4 L680.6 457.0 M690.6 416.1 L691.7 456.7 M701.7 415.8 L702.7 456.4 M712.7 415.5 L713.8 456.1 M723.8 415.2 L724.8 455.9 M734.8 414.9 L735.8 455.6 M745.8 414.6 L746.9 455.3 M756.9 414.3 L757.9 455.1 M767.9 414.0 L769.0 454.8 M779.0 413.7 L780.0 454.5 M790.0 413.5 L791.1 454.3 M801.1 413.2 L802.1 454.0 M812.1 412.9 L813.2 453.7 M823.2 412.6 L824.2 453.4 M834.2 412.3 L835.3 453.2 M845.3 412.0 L846.3 452.9 M856.3 411.7 L857.4 452.6 M867.4 411.4 L868.4 452.4 M878.4 411.1 L879.5 452.1 M889.4 410.8 L890.5 451.8 M900.5 410.5 L901.5 451.6 M911.5 410.2 L912.6 451.3 M922.6 409.9 L923.6 451.0 M933.6 409.6 L934.7 450.8 M944.7 409.3 L945.7 450.5 M955.7 409.0 L956.8 450.2 M966.8 408.7 L967.8 449.9 M977.8 408.4 L978.9 449.7 M988.9 408.1 L989.9 449.4 M999.9 407.8 L1001.0 449.1 M1011.0 407.5 L1012.0 448.9 M1022.0 407.2 L1023.1 448.6 M1033.0 406.9 L1034.1 448.3 M1044.1 406.6 L1045.2 448.1 M1055.1 406.3 L1056.2 447.8 M1066.2 406.0 L1067.2 447.5 M1077.2 405.8 L1078.3 447.2 M1088.3 405.5 L1089.3 447.0 M1099.3 405.2 L1100.4 446.7 M1110.4 404.9 L1111.4 446.4 M1121.4 404.6 L1122.5 446.2 M1132.5 404.3 L1133.5 445.9 M1143.5 404.0 L1144.6 445.6 M1154.6 403.7 L1155.6 445.4 M1165.6 403.4 L1166.7 445.1 M1176.6 403.1 L1177.7 444.8 M1187.7 402.8 L1188.8 444.6 M1198.7 402.5 L1199.8 444.3 M1209.8 402.2 L1210.9 444.0 M1220.8 401.9 L1221.9 443.7 M1231.9 401.6 L1232.9 443.5 M1242.9 401.3 L1244.0 443.2 M1254.0 401.0 L1255.0 442.9 M1265.0 400.7 L1266.1 442.7 M1276.1 400.4 L1277.1 442.4 M1287.1 400.1 L1288.2 442.1 M1298.2 399.8 L1299.2 441.9 M1309.2 399.5 L1310.3 441.6 M1320.2 399.2 L1321.3 441.3 M1331.3 398.9 L1332.4 441.0 M1342.3 398.6 L1343.4 440.8 M1353.4 398.3 L1354.5 440.5 M1364.4 398.1 L1365.5 440.2 M1375.5 397.8 L1376.6 440.0 M1386.5 397.5 L1387.6 439.7 M1397.6 397.2 L1398.6 439.4 M1408.6 396.9 L1409.7 439.2 M1419.7 396.6 L1420.7 438.9 M1430.7 396.3 L1431.8 438.6 M1441.8 396.0 L1442.8 438.3 M1452.8 395.7 L1453.9 438.1 M1463.8 395.4 L1464.9 437.8 M1474.9 395.1 L1476.0 437.5 M1485.9 394.8 L1487.0 437.3 M1497.0 394.5 L1498.1 437.0 M1508.0 394.2 L1509.1 436.7 M1519.1 393.9 L1520.2 436.5 M1530.1 393.6 L1531.2 436.2 M1541.2 393.3 L1542.3 435.9 M1552.2 393.0 L1553.3 435.7 M1563.6 392.8 L1564.0 435.4 M1574.6 392.6 L1575.1 435.3 M1585.7 392.5 L1586.1 435.2 M1596.7 392.4 L1597.2 435.1 M1609.4 392.9 L1606.6 435.6 M1609.4 392.9 L1623.3 393.8 L1620.6 436.5 L1606.6 435.6 M1620.4 393.6 L1617.6 436.3 M1620.4 393.6 L1634.4 394.5 L1631.6 437.2 L1617.6 436.3 M1631.4 394.3 L1628.7 437.0 M1631.4 394.3 L1645.4 395.2 L1642.6 437.9 L1628.7 437.0 M1644.8 395.4 L1637.3 437.6 M1644.8 395.4 L1658.6 397.9 L1651.0 440.0 L1637.3 437.6 M1655.7 397.4 L1648.1 439.5 M1655.7 397.4 L1669.5 399.9 L1661.9 442.0 L1648.1 439.5 M1666.6 399.3 L1659.0 441.5 M1666.6 399.3 L1680.4 401.8 L1672.8 443.9 L1659.0 441.5 M1677.5 401.3 L1669.9 443.4 M1677.5 401.3 L1691.2 403.8 L1683.7 445.9 L1669.9 443.4 M1691.2 404.7 L1677.5 445.3 M1691.2 404.7 L1704.5 409.2 L1690.8 449.7 L1677.5 445.3 M1701.7 408.2 L1688.0 448.8 M1701.7 408.2 L1715.0 412.7 L1701.3 453.3 L1688.0 448.8 M1712.2 411.8 L1698.5 452.3 M1712.2 411.8 L1725.4 416.2 L1711.7 456.8 L1698.5 452.3 M1722.6 415.3 L1708.9 455.9 M1722.6 415.3 L1735.9 419.8 L1722.2 460.3 L1708.9 455.9 M1735.7 421.0 L1716.0 459.0 M1735.7 421.0 L1748.1 427.5 L1728.5 465.5 L1716.0 459.0 M1745.5 426.1 L1725.8 464.1 M1745.5 426.1 L1758.0 432.6 L1738.3 470.6 L1725.8 464.1 M1755.3 431.2 L1735.7 469.2 M1755.3 431.2 L1767.8 437.6 L1748.1 475.6 L1735.7 469.2 M1766.3 437.6 L1743.7 474.0 M1766.3 437.6 L1778.2 445.0 L1755.6 481.4 L1743.7 474.0 M1775.7 443.4 L1753.1 479.8 M1785.0 449.3 L1762.5 485.7" fill="none" stroke="#f0f000" stroke-width="0.75" opacity="0.8"/><path d="M660.5 417.0 L661.5 457.4 M671.5 416.7 L672.6 457.2 M682.6 416.4 L683.6 456.9 M693.6 416.1 L694.7 456.6 M704.7 415.8 L705.7 456.4 M715.7 415.5 L716.8 456.1 M726.8 415.2 L727.8 455.8 M737.8 414.9 L738.8 455.6 M748.8 414.6 L749.9 455.3 M759.9 414.3 L760.9 455.0 M770.9 414.0 L772.0 454.7 M782.0 413.7 L783.0 454.5 M793.0 413.4 L794.1 454.2 M804.1 413.1 L805.1 453.9 M815.1 412.8 L816.2 453.7 M826.2 412.5 L827.2 453.4 M837.2 412.2 L838.3 453.1 M848.3 411.9 L849.3 452.9 M859.3 411.6 L860.4 452.6 M870.4 411.3 L871.4 452.3 M881.4 411.0 L882.5 452.0 M892.4 410.7 L893.5 451.8 M903.5 410.4 L904.5 451.5 M914.5 410.1 L915.6 451.2 M925.6 409.8 L926.6 451.0 M936.6 409.5 L937.7 450.7 M947.7 409.2 L948.7 450.4 M958.7 408.9 L959.8 450.2 M969.8 408.7 L970.8 449.9 M980.8 408.4 L981.9 449.6 M991.9 408.1 L992.9 449.3 M1002.9 407.8 L1004.0 449.1 M1014.0 407.5 L1015.0 448.8 M1025.0 407.2 L1026.1 448.5 M1036.0 406.9 L1037.1 448.3 M1047.1 406.6 L1048.2 448.0 M1058.1 406.3 L1059.2 447.7 M1069.2 406.0 L1070.2 447.5 M1080.2 405.7 L1081.3 447.2 M1091.3 405.4 L1092.3 446.9 M1102.3 405.1 L1103.4 446.6 M1113.4 404.8 L1114.4 446.4 M1124.4 404.5 L1125.5 446.1 M1135.5 404.2 L1136.5 445.8 M1146.5 403.9 L1147.6 445.6 M1157.6 403.6 L1158.6 445.3 M1168.6 403.3 L1169.7 445.0 M1179.6 403.0 L1180.7 444.8 M1190.7 402.7 L1191.8 444.5 M1201.7 402.4 L1202.8 444.2 M1212.8 402.1 L1213.9 443.9 M1223.8 401.8 L1224.9 443.7 M1234.9 401.5 L1235.9 443.4 M1245.9 401.2 L1247.0 443.1 M1257.0 400.9 L1258.0 442.9 M1268.0 400.6 L1269.1 442.6 M1279.1 400.4 L1280.1 442.3 M1290.1 400.1 L1291.2 442.1 M1301.2 399.8 L1302.2 441.8 M1312.2 399.5 L1313.3 441.5 M1323.2 399.2 L1324.3 441.2 M1334.3 398.9 L1335.4 441.0 M1345.3 398.6 L1346.4 440.7 M1356.4 398.3 L1357.5 440.4 M1367.4 398.0 L1368.5 440.2 M1378.5 397.7 L1379.6 439.9 M1389.5 397.4 L1390.6 439.6 M1400.6 397.1 L1401.6 439.4 M1411.6 396.8 L1412.7 439.1 M1422.7 396.5 L1423.7 438.8 M1433.7 396.2 L1434.8 438.5 M1444.7 395.9 L1445.8 438.3 M1455.8 395.6 L1456.9 438.0 M1466.8 395.3 L1467.9 437.7 M1477.9 395.0 L1479.0 437.5 M1488.9 394.7 L1490.0 437.2 M1500.0 394.4 L1501.1 436.9 M1511.0 394.1 L1512.1 436.7 M1522.1 393.8 L1523.2 436.4 M1533.1 393.5 L1534.2 436.1 M1544.2 393.2 L1545.3 435.8 M1555.2 392.9 L1556.3 435.6" fill="none" stroke="#f0f000" stroke-width="0.6" opacity="0.55"/><polyline points="658.0,417.0 1560.0,393.9 1600.0,393.1 1640.0,394.4 1680.0,400.6 1720.0,412.5 1760.0,430.0 1782.4,450.0" fill="none" stroke="#f0f000" stroke-width="1.2"/><polyline points="658.0,457.5 1560.0,434.4 1600.0,434.6 1640.0,438.5 1680.0,446.0 1720.0,461.0 1767.5,486.9" fill="none" stroke="#f0f000" stroke-width="1.4"/><polyline points="1570.0,433.6 1600.0,434.2 1640.0,438.0 1680.0,445.5 1720.0,460.5 1760.0,479.0" fill="none" stroke="#f0f000" stroke-width="2.6" opacity="0.8"/><polyline points="1580.0,394.2 1600.0,393.6 1640.0,395.2 1680.0,401.8 1720.0,413.8 1760.0,431.5" fill="none" stroke="#f0f000" stroke-width="2.2" opacity="0.75"/><polyline points="1767.5,486.9 1782.4,450.0" fill="none" stroke="#f0f000" stroke-width="1"/><polygon points="658.0,417.0 670.0,416.7 670.0,457.2 658.0,457.5" fill="#000" stroke="#b8b000" stroke-width="1"/><polyline points="522.0,421.9 590.0,407.9 860.0,400.6 1300.0,388.8 1646.0,380.5 1896.0,374.4" fill="none" stroke="#8c8c8c" stroke-width="1.8" stroke-linejoin="round"/><polyline points="522.0,481.2 549.0,474.2 593.0,472.6 860.0,463.8 1300.0,454.0 1640.0,446.9 1683.0,444.8 1725.5,443.7 1751.8,448.0 1770.8,456.9 1781.3,470.6 1786.6,493.8 1792.0,540.0 1797.0,632.0 1800.8,780.0 1807.0,1005.0" fill="none" stroke="#8c8c8c" stroke-width="1.8" stroke-linejoin="round"/><polyline points="522.0,492.1 562.8,478.4 593.0,472.6" fill="none" stroke="#8c8c8c" stroke-width="1.8" stroke-linejoin="round"/><polyline points="522.0,541.3 544.6,534.0 860.0,525.8 1300.0,516.3 1650.0,507.3 1896.0,502.0" fill="none" stroke="#8c8c8c" stroke-width="1.8" stroke-linejoin="round"/><polyline points="1640.0,446.9 1703.3,467.5 1749.7,501.2 1773.0,530.0 1797.0,632.0" fill="none" stroke="#8c8c8c" stroke-width="1.8" stroke-linejoin="round"/><polyline points="1646.0,380.5 1730.4,401.2 1779.4,433.9 1799.5,457.8 1827.3,494.3 1835.0,513.5 1845.0,560.0 1859.5,636.7 1864.0,780.0 1870.6,1005.0" fill="none" stroke="#8c8c8c" stroke-width="1.8" stroke-linejoin="round"/><polyline points="1896.0,384.0 1828.3,396.0 1780.3,432.9 1759.2,482.8 1751.5,505.8 1746.0,540.0 1733.0,636.7 1736.0,780.0 1742.8,1005.0" fill="none" stroke="#8c8c8c" stroke-width="1.8" stroke-linejoin="round"/><polyline points="1719.0,507.0 1730.7,521.2 1731.0,540.0 1733.0,636.7" fill="none" stroke="#8c8c8c" stroke-width="1.8" stroke-linejoin="round"/><polyline points="1896.0,449.2 1867.6,452.0 1843.6,467.4 1826.4,492.4 1813.0,523.0 1809.0,560.0 1797.0,632.0" fill="none" stroke="#8c8c8c" stroke-width="1.8" stroke-linejoin="round"/><polyline points="1896.0,436.7 1847.5,442.5 1821.6,450.2 1803.3,473.2 1797.6,494.3 1795.7,560.0 1797.0,632.0" fill="none" stroke="#8c8c8c" stroke-width="1.8" stroke-linejoin="round"/><polyline points="1725.0,443.7 1896.0,437.7" fill="none" stroke="#8c8c8c" stroke-width="1.8" stroke-linejoin="round"/><polyline points="1857.0,503.0 1857.2,540.0 1859.5,636.7" fill="none" stroke="#8c8c8c" stroke-width="1.8" stroke-linejoin="round"/><polygon points="1722.8,405.0 1740.0,410.0 1726.6,415.6" fill="#505050" opacity="0.85"/><polygon points="1802.4,403.2 1822.5,408.0 1802.4,412.8" fill="#4a4a4a" opacity="0.85"/><polygon points="1882.0,400.3 1896.0,406.0 1882.0,411.8" fill="#4a4a4a" opacity="0.85"/><polygon points="1874.3,414.7 1893.5,416.6 1876.2,426.2" fill="#505060" opacity="0.85"/><polygon points="1684.4,476.0 1703.6,470.3 1704.5,480.9" fill="#4a5a5a" opacity="0.85"/><polygon points="1703.6,475.0 1718.0,469.3 1718.0,479.9" fill="#454545" opacity="0.85"/><polygon points="1861.8,470.3 1881.0,464.5 1882.0,475.1" fill="#454545" opacity="0.85"/><polygon points="1872.4,479.0 1886.8,466.5 1891.6,477.0" fill="#4a5a5a" opacity="0.85"/><polygon points="1799.5,464.5 1819.6,455.9 1803.3,473.2" fill="#50506a" opacity="0.85"/><polygon points="1826.4,495.2 1837.0,495.2 1830.2,513.5" fill="#4a5a5a" opacity="0.85"/><polygon points="1741.0,493.3 1759.2,499.0 1753.5,507.7" fill="#4a5a5a" opacity="0.85"/><polygon points="1773.6,550.0 1784.2,532.6 1784.2,551.8" fill="#50506a" opacity="0.85"/><polygon points="1761.7,550.4 1757.1,571.0 1769.8,571.0" fill="#4a5555" opacity="0.85"/><polygon points="1766.3,618.3 1758.3,639.0 1770.9,639.0" fill="#5a6468" opacity="0.85"/><polygon points="1822.7,567.6 1834.2,567.6 1828.4,587.2" fill="#3f7a3f" opacity="0.85"/><polygon points="1772.0,550.4 1783.6,540.0 1783.6,552.7" fill="#50506a" opacity="0.85"/><g opacity="0.55"><path d="M752 416 Q744 417 744 433 Q744 450 752 452 L825 449 Q845 447 845 432 Q845 415 825 413 Z" fill="#e8e0c0"/></g><path d="M752 417 Q745 418 745 433 Q745 449 752 451 L772 450.5 L772 416 Z" fill="#e06050" opacity="0.45"/><path d="M798 416 L822 414.5 L826 450 L800 451 Z" fill="#707000" opacity="0.35"/><path d="M822 414.5 Q843 416 844 432 Q843 448 826 449.5 Z" fill="#c0f0b0" opacity="0.4"/><path d="M670.0 437.0 C803.3 433.8 1315.0 422.0 1470.0 418.1 C1625.0 414.1 1571.7 413.4 1600.0 413.2 C1628.3 413.0 1626.7 415.1 1640.0 417.0 C1653.3 418.9 1666.7 420.7 1680.0 424.5 C1693.3 428.3 1708.2 434.5 1720.0 440.0 C1731.8 445.5 1741.1 450.0 1750.9 457.4 C1760.7 464.8 1772.1 476.0 1779.0 484.3 C1785.9 492.6 1788.7 500.0 1792.5 507.1 C1796.3 514.2 1798.3 518.2 1801.9 527.2 C1805.5 536.2 1810.5 547.2 1814.0 560.8 C1817.5 574.4 1820.7 594.0 1823.2 609.0 C1825.7 624.0 1827.8 636.7 1829.1 650.5 C1830.3 664.3 1830.4 678.1 1830.7 691.9 C1831.0 705.7 1830.6 719.5 1830.7 733.3 C1830.8 747.1 1831.0 760.6 1831.4 774.8 C1831.8 789.0 1832.5 804.1 1833.0 818.3 C1833.5 832.5 1833.8 846.0 1834.2 859.8 C1834.6 873.6 1835.0 887.4 1835.4 901.2 C1835.8 915.0 1836.0 928.6 1836.5 942.6 C1837.0 956.6 1837.9 974.8 1838.3 985.2 C1838.7 995.6 1838.9 1001.7 1839.0 1005.0" fill="none" stroke="#55555c" stroke-width="2"/><path d="M670.0 437.0 C803.3 433.8 1315.0 422.0 1470.0 418.1 C1625.0 414.1 1571.7 413.4 1600.0 413.2 C1628.3 413.0 1626.7 415.1 1640.0 417.0 C1653.3 418.9 1666.7 420.7 1680.0 424.5 C1693.3 428.3 1708.2 434.5 1720.0 440.0 C1731.8 445.5 1741.1 450.0 1750.9 457.4 C1760.7 464.8 1772.1 476.0 1779.0 484.3 C1785.9 492.6 1788.7 500.0 1792.5 507.1 C1796.3 514.2 1798.3 518.2 1801.9 527.2 C1805.5 536.2 1810.5 547.2 1814.0 560.8 C1817.5 574.4 1820.7 594.0 1823.2 609.0 C1825.7 624.0 1827.8 636.7 1829.1 650.5 C1830.3 664.3 1830.4 678.1 1830.7 691.9 C1831.0 705.7 1830.6 719.5 1830.7 733.3 C1830.8 747.1 1831.0 760.6 1831.4 774.8 C1831.8 789.0 1832.5 804.1 1833.0 818.3 C1833.5 832.5 1833.8 846.0 1834.2 859.8 C1834.6 873.6 1835.0 887.4 1835.4 901.2 C1835.8 915.0 1836.0 928.6 1836.5 942.6 C1837.0 956.6 1837.9 974.8 1838.3 985.2 C1838.7 995.6 1838.9 1001.7 1839.0 1005.0" fill="none" stroke="#a8a8b0" stroke-width="0.9" stroke-dasharray="3 2"/><g transform="translate(677.5,436.8) rotate(-1.4)"><rect x="-5" y="-2.8" width="7" height="5.6" fill="#707070" stroke="#444" stroke-width="0.5"/><path d="M2 -5 L5.5 0 L2 5 L3 0 Z" fill="#303030"/></g><g transform="translate(719.2,435.8) rotate(-1.4)"><rect x="-5" y="-2.8" width="7" height="5.6" fill="#707070" stroke="#444" stroke-width="0.5"/><path d="M2 -5 L5.5 0 L2 5 L3 0 Z" fill="#303030"/></g><g transform="translate(760.9,434.8) rotate(-1.4)"><rect x="-5" y="-2.8" width="7" height="5.6" fill="#707070" stroke="#444" stroke-width="0.5"/><path d="M2 -5 L5.5 0 L2 5 L3 0 Z" fill="#303030"/></g><g transform="translate(802.6,433.8) rotate(-1.4)"><rect x="-5" y="-2.8" width="7" height="5.6" fill="#707070" stroke="#444" stroke-width="0.5"/><path d="M2 -5 L5.5 0 L2 5 L3 0 Z" fill="#303030"/></g><g transform="translate(844.3,432.9) rotate(-1.4)"><rect x="-5" y="-2.8" width="7" height="5.6" fill="#707070" stroke="#444" stroke-width="0.5"/><path d="M2 -5 L5.5 0 L2 5 L3 0 Z" fill="#303030"/></g><g transform="translate(886.0,431.9) rotate(-1.4)"><rect x="-5" y="-2.8" width="7" height="5.6" fill="#707070" stroke="#444" stroke-width="0.5"/><path d="M2 -5 L5.5 0 L2 5 L3 0 Z" fill="#303030"/></g><g transform="translate(927.7,430.9) rotate(-1.4)"><rect x="-5" y="-2.8" width="7" height="5.6" fill="#707070" stroke="#444" stroke-width="0.5"/><path d="M2 -5 L5.5 0 L2 5 L3 0 Z" fill="#303030"/></g><g transform="translate(969.4,429.9) rotate(-1.4)"><rect x="-5" y="-2.8" width="7" height="5.6" fill="#707070" stroke="#444" stroke-width="0.5"/><path d="M2 -5 L5.5 0 L2 5 L3 0 Z" fill="#303030"/></g><g transform="translate(1011.1,428.9) rotate(-1.4)"><rect x="-5" y="-2.8" width="7" height="5.6" fill="#707070" stroke="#444" stroke-width="0.5"/><path d="M2 -5 L5.5 0 L2 5 L3 0 Z" fill="#303030"/></g><g transform="translate(1052.8,427.9) rotate(-1.4)"><rect x="-5" y="-2.8" width="7" height="5.6" fill="#707070" stroke="#444" stroke-width="0.5"/><path d="M2 -5 L5.5 0 L2 5 L3 0 Z" fill="#303030"/></g><g transform="translate(1094.5,426.9) rotate(-1.4)"><rect x="-5" y="-2.8" width="7" height="5.6" fill="#707070" stroke="#444" stroke-width="0.5"/><path d="M2 -5 L5.5 0 L2 5 L3 0 Z" fill="#303030"/></g><g transform="translate(1136.2,426.0) rotate(-1.4)"><rect x="-5" y="-2.8" width="7" height="5.6" fill="#707070" stroke="#444" stroke-width="0.5"/><path d="M2 -5 L5.5 0 L2 5 L3 0 Z" fill="#303030"/></g><g transform="translate(1177.9,425.0) rotate(-1.4)"><rect x="-5" y="-2.8" width="7" height="5.6" fill="#707070" stroke="#444" stroke-width="0.5"/><path d="M2 -5 L5.5 0 L2 5 L3 0 Z" fill="#303030"/></g><g transform="translate(1219.6,424.0) rotate(-1.4)"><rect x="-5" y="-2.8" width="7" height="5.6" fill="#707070" stroke="#444" stroke-width="0.5"/><path d="M2 -5 L5.5 0 L2 5 L3 0 Z" fill="#303030"/></g><g transform="translate(1261.3,423.0) rotate(-1.4)"><rect x="-5" y="-2.8" width="7" height="5.6" fill="#707070" stroke="#444" stroke-width="0.5"/><path d="M2 -5 L5.5 0 L2 5 L3 0 Z" fill="#303030"/></g><g transform="translate(1303.0,422.0) rotate(-1.4)"><rect x="-5" y="-2.8" width="7" height="5.6" fill="#707070" stroke="#444" stroke-width="0.5"/><path d="M2 -5 L5.5 0 L2 5 L3 0 Z" fill="#303030"/></g><g transform="translate(1344.7,421.0) rotate(-1.4)"><rect x="-5" y="-2.8" width="7" height="5.6" fill="#707070" stroke="#444" stroke-width="0.5"/><path d="M2 -5 L5.5 0 L2 5 L3 0 Z" fill="#303030"/></g><g transform="translate(1386.4,420.1) rotate(-1.4)"><rect x="-5" y="-2.8" width="7" height="5.6" fill="#707070" stroke="#444" stroke-width="0.5"/><path d="M2 -5 L5.5 0 L2 5 L3 0 Z" fill="#303030"/></g><g transform="translate(1428.1,419.1) rotate(-1.4)"><rect x="-5" y="-2.8" width="7" height="5.6" fill="#707070" stroke="#444" stroke-width="0.5"/><path d="M2 -5 L5.5 0 L2 5 L3 0 Z" fill="#303030"/></g><g transform="translate(1469.8,418.1) rotate(-1.4)"><rect x="-5" y="-2.8" width="7" height="5.6" fill="#707070" stroke="#444" stroke-width="0.5"/><path d="M2 -5 L5.5 0 L2 5 L3 0 Z" fill="#303030"/></g><g transform="translate(1511.5,416.5) rotate(-1.4)"><rect x="-5" y="-2.8" width="7" height="5.6" fill="#707070" stroke="#444" stroke-width="0.5"/><path d="M2 -5 L5.5 0 L2 5 L3 0 Z" fill="#303030"/></g><g transform="translate(1553.2,414.9) rotate(-1.4)"><rect x="-5" y="-2.8" width="7" height="5.6" fill="#707070" stroke="#444" stroke-width="0.5"/><path d="M2 -5 L5.5 0 L2 5 L3 0 Z" fill="#303030"/></g><g transform="translate(1594.9,413.3) rotate(-1.4)"><rect x="-5" y="-2.8" width="7" height="5.6" fill="#707070" stroke="#444" stroke-width="0.5"/><path d="M2 -5 L5.5 0 L2 5 L3 0 Z" fill="#303030"/></g><g transform="translate(1618.4,415.5) rotate(3.0)"><rect x="-5" y="-2.8" width="7" height="5.6" fill="#707070" stroke="#444" stroke-width="0.5"/><path d="M2 -5 L5.5 0 L2 5 L3 0 Z" fill="#303030"/></g><g transform="translate(1639.5,417.5) rotate(8.0)"><rect x="-5" y="-2.8" width="7" height="5.6" fill="#707070" stroke="#444" stroke-width="0.5"/><path d="M2 -5 L5.5 0 L2 5 L3 0 Z" fill="#303030"/></g><g transform="translate(1678.7,424.5) rotate(14.0)"><rect x="-7" y="-2.4" width="9" height="4.8" fill="#18d0e8" stroke="#0a7080" stroke-width="0.5"/><path d="M1 -5.5 L4.5 0 L1 5.5 L2.2 0 Z" fill="#15262a"/></g><g transform="translate(1719.0,439.5) rotate(25.0)"><rect x="-7" y="-2.4" width="9" height="4.8" fill="#18d0e8" stroke="#0a7080" stroke-width="0.5"/><path d="M1 -5.5 L4.5 0 L1 5.5 L2.2 0 Z" fill="#15262a"/></g><g transform="translate(1754.9,460.1) rotate(33.0)"><rect x="-7" y="-2.4" width="9" height="4.8" fill="#18d0e8" stroke="#0a7080" stroke-width="0.5"/><path d="M1 -5.5 L4.5 0 L1 5.5 L2.2 0 Z" fill="#15262a"/></g><g transform="translate(1783.0,491.0) rotate(58.0)"><rect x="-5" y="-2.8" width="7" height="5.6" fill="#707070" stroke="#444" stroke-width="0.5"/><path d="M2 -5 L5.5 0 L2 5 L3 0 Z" fill="#303030"/></g><g transform="translate(1801.9,528.6) rotate(68.0)"><rect x="-5" y="-2.8" width="7" height="5.6" fill="#707070" stroke="#444" stroke-width="0.5"/><path d="M2 -5 L5.5 0 L2 5 L3 0 Z" fill="#303030"/></g><g transform="translate(1814.0,567.5) rotate(76.0)"><rect x="-5" y="-2.8" width="7" height="5.6" fill="#707070" stroke="#444" stroke-width="0.5"/><path d="M2 -5 L5.5 0 L2 5 L3 0 Z" fill="#303030"/></g><g transform="translate(1823.2,609.0) rotate(80.0)"><rect x="-7" y="-2.4" width="9" height="4.8" fill="#18d0e8" stroke="#0a7080" stroke-width="0.5"/><path d="M1 -5.5 L4.5 0 L1 5.5 L2.2 0 Z" fill="#15262a"/></g><g transform="translate(1829.1,650.5) rotate(85.0)"><rect x="-7" y="-2.4" width="9" height="4.8" fill="#18d0e8" stroke="#0a7080" stroke-width="0.5"/><path d="M1 -5.5 L4.5 0 L1 5.5 L2.2 0 Z" fill="#15262a"/></g><g transform="translate(1830.7,691.9) rotate(89.0)"><rect x="-7" y="-2.4" width="9" height="4.8" fill="#18d0e8" stroke="#0a7080" stroke-width="0.5"/><path d="M1 -5.5 L4.5 0 L1 5.5 L2.2 0 Z" fill="#15262a"/></g><g transform="translate(1830.7,733.3) rotate(89.0)"><rect x="-7" y="-2.4" width="9" height="4.8" fill="#18d0e8" stroke="#0a7080" stroke-width="0.5"/><path d="M1 -5.5 L4.5 0 L1 5.5 L2.2 0 Z" fill="#15262a"/></g><g transform="translate(1831.4,774.8) rotate(88.0)"><rect x="-5" y="-2.8" width="7" height="5.6" fill="#707070" stroke="#444" stroke-width="0.5"/><path d="M2 -5 L5.5 0 L2 5 L3 0 Z" fill="#303030"/></g><g transform="translate(1833.0,818.3) rotate(88.0)"><rect x="-5" y="-2.8" width="7" height="5.6" fill="#707070" stroke="#444" stroke-width="0.5"/><path d="M2 -5 L5.5 0 L2 5 L3 0 Z" fill="#303030"/></g><g transform="translate(1834.2,859.8) rotate(88.0)"><rect x="-5" y="-2.8" width="7" height="5.6" fill="#707070" stroke="#444" stroke-width="0.5"/><path d="M2 -5 L5.5 0 L2 5 L3 0 Z" fill="#303030"/></g><g transform="translate(1835.4,901.2) rotate(88.0)"><rect x="-5" y="-2.8" width="7" height="5.6" fill="#707070" stroke="#444" stroke-width="0.5"/><path d="M2 -5 L5.5 0 L2 5 L3 0 Z" fill="#303030"/></g><g transform="translate(1836.5,942.6) rotate(88.0)"><rect x="-5" y="-2.8" width="7" height="5.6" fill="#707070" stroke="#444" stroke-width="0.5"/><path d="M2 -5 L5.5 0 L2 5 L3 0 Z" fill="#303030"/></g><g transform="translate(1838.3,985.2) rotate(88.0)"><rect x="-5" y="-2.8" width="7" height="5.6" fill="#707070" stroke="#444" stroke-width="0.5"/><path d="M2 -5 L5.5 0 L2 5 L3 0 Z" fill="#303030"/></g><circle cx="650" cy="196" r="57.3" fill="none" stroke="#fff" stroke-width="13.5"/><path d="M599 183 Q620 179 650 180 Q680 179 701 183 L701 204 Q690 203 676 205 Q664 216 660 224 L660 246 L640 246 L640 224 Q636 216 624 205 Q610 203 599 204 Z" fill="#fff"/><path d="M850.3 207.4 L882.7 244.7" stroke="#fff" stroke-width="2"/><path d="M800.3 244.7 A63.5 63.5 0 1 1 882.7 244.7" fill="none" stroke="#fff" stroke-width="2"/><path d="M829.7 203 A14.5 14.5 0 1 1 850.3 203.1" fill="none" stroke="#fff" stroke-width="2"/><path d="M800.3 244.7 L839.5 198" stroke="#fff" stroke-width="3.6"/><polygon points="620.7,307 670.4,269.6 670.4,294.2 722.6,294.2 722.6,320.3 670.4,320.3 670.4,344.8" fill="none" stroke="#fff" stroke-width="2" stroke-dasharray="4 2.5"/><polygon points="875.4,307 824.8,269.6 824.8,294.2 773.5,294.2 773.5,320.3 824.8,320.3 824.8,344.8" fill="none" stroke="#fff" stroke-width="2" stroke-dasharray="4 2.5"/></svg>
<div class="t" style="left:614.00px;top:185.80px;font-size:21.5px;letter-spacing:0.648px;font-weight:bold;color:#00ffff;">0.0deg</div>
<div class="t" style="left:795.00px;top:185.49px;font-size:19.5px;letter-spacing:1.066px;font-weight:bold;color:#00ffff;">0.00km/h</div>
<div class="t" style="left:825.00px;top:222.07px;font-size:10.55px;letter-spacing:0.571px;font-weight:bold;color:#e8e8e8;">limited</div>
<div class="t" style="left:824.00px;top:234.07px;font-size:10.55px;letter-spacing:0.612px;font-weight:bold;color:#e8e8e8;">72km/h</div>
</body></html>
